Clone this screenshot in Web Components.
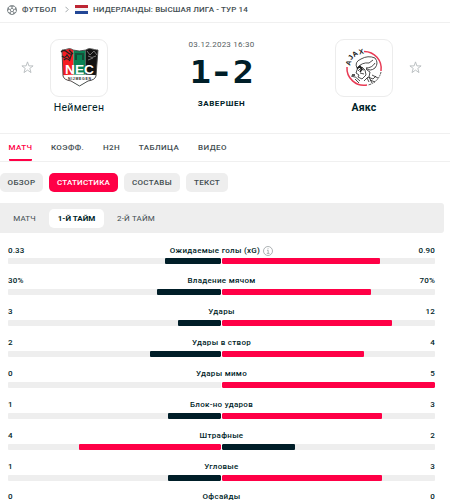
<!DOCTYPE html>
<html lang="ru">
<head>
<meta charset="utf-8">
<title>Неймеген - Аякс</title>
<style>
  :root {
    --navy: #001e28;
    --red: #ff0046;
    --grey: #eee;
    --muted: #555e61;
  }

  body {
    margin: 0;
    height: 500px;
    overflow: hidden;
    background: #fff;
    color: var(--navy);
    font-family: Roboto, "Liberation Sans", sans-serif;
    font-size: 8px;
  }
</style>
</head>
<body>
<match-page></match-page>

<script>
class MatchBreadcrumb extends HTMLElement {
  constructor () {
    super();
    this.attachShadow({ mode: "open" });
  }

  connectedCallback () {
    this.shadowRoot.innerHTML = /* html */`
    <style>
      :host {
        display: flex;
        align-items: center;
        box-sizing: border-box;
        height: 23px;
        padding: 0 0 3px 7px;
        border-bottom: 1px solid #f0f0f0;
        color: #414c50;
        font-size: 8px;
        font-weight: 500;
        white-space: nowrap;
      }
      .sport { width: 43px; margin-left: 5px; letter-spacing: .35px; }
      .flag { margin: 0 5px 0 5px; }
      .league { letter-spacing: .14px; }
    </style>
    <svg width="10" height="10" viewBox="0 0 10 10" fill="none" stroke="#6b7477" stroke-width=".8">
      <circle cx="5" cy="5" r="4.5"/>
      <path d="M5 3.2 6.8 4.5 6.1 6.6H3.9L3.2 4.5ZM5 3.2V1.8M6.8 4.5 8.3 4M6.1 6.6 7 8M3.9 6.6 3 8M3.2 4.5 1.7 4M3.2 1.2 5 1.8 6.8 1.2M8.9 2.7 8.3 4 9.3 5.6M8.6 7.5 7 8 5.7 9.3M4.3 9.3 3 8 1.4 7.5M.7 5.6 1.7 4 1.1 2.7"/>
    </svg>
    <div class="sport">ФУТБОЛ</div>
    <svg width="5" height="7" viewBox="0 0 5 7" fill="none" stroke="#999fa1" stroke-width=".9"><path d="M.5 .8 3.2 3.5 .5 6.2"/></svg>
    <svg class="flag" width="13" height="9" viewBox="0 0 13 9"><path fill="#bd2634" d="M0 0h13v3H0z"/><path fill="#f4f4f4" d="M0 3h13v3H0z"/><path fill="#224796" d="M0 6h13v3H0z"/></svg>
    <div class="league">НИДЕРЛАНДЫ: ВЫСШАЯ ЛИГА - ТУР 14</div>
    `;
  }
}

// team badge with its name below; the crest goes in the slot
class TeamCard extends HTMLElement {
  constructor () {
    super();
    this.attachShadow({ mode: "open" });
  }

  connectedCallback () {
    const star = /* html */`
      <svg class="star" width="13" height="13" viewBox="0 0 13 13" fill="none" stroke="#b5bbbd" stroke-width=".9">
        <path d="M6.5 .9 7.9 4.9H12.1L8.8 7.4 10 11.6 6.5 9.1 3 11.6 4.2 7.4 .9 4.9H5.1Z"/>
      </svg>`;
    const column = /* html */`
      <div class="team">
        <div class="logo"><slot></slot></div>
        <div class="name">${this.getAttribute("name")}</div>
      </div>`;

    this.shadowRoot.innerHTML = /* html */`
    <style>
      :host { display: flex; gap: 16px; }
      .star { margin-top: 22px; }
      .team { display: flex; flex-direction: column; align-items: center; width: 58px; }
      .logo {
        display: flex;
        align-items: center;
        justify-content: center;
        box-sizing: border-box;
        width: 58px;
        height: 58px;
        border: 1px solid #ececec;
        border-radius: 9px;
      }
      .name {
        margin-top: 4px;
        font-size: 10.5px;
        font-weight: ${this.getAttribute("weight") || 400};
        line-height: 13px;
        letter-spacing: ${this.getAttribute("spacing") || "0"};
      }
    </style>
    ${this.hasAttribute("away") ? column + star : star + column}
    `;
  }
}

class MatchHeader extends HTMLElement {
  constructor () {
    super();
    this.attachShadow({ mode: "open" });
  }

  connectedCallback () {
    this.shadowRoot.innerHTML = /* html */`
    <style>
      :host {
        display: flex;
        justify-content: space-between;
        box-sizing: border-box;
        height: 110px;
        padding: 16px 28px 0 21px;
      }
      .info { display: flex; flex-direction: column; align-items: center; white-space: nowrap; }
      .date { margin-top: 1px; font-size: 8px; line-height: 10px; color: #555e61; letter-spacing: .23px; }
      .score {
        display: flex;
        gap: 1px;
        height: 36px;
        margin-top: 3px;
        font-family: "DejaVu Sans Mono", monospace;
        font-size: 32px;
        font-weight: 700;
        line-height: 38px;
      }
      .score span { width: 20.5px; text-align: center; transform: scaleX(1.1); }
      .score .dash { transform: scaleX(1.25); }
      .status { margin-top: 10px; font-size: 8px; font-weight: 700; line-height: 10px; letter-spacing: .6px; }
    </style>
    <team-card name="Неймеген" spacing=".25px">
      <svg width="43" height="42" viewBox="0 0 41 42">
        <defs><clipPath id="crest"><path d="M3 3C8 3 10 0 14 3Q20 5 27 3C31 0 34 3 39 3L37 29Q36 33 29 34L20.500 39 12 34Q5 33 4 29Z"/></clipPath></defs>
        <g clip-path="url(#crest)">
          <path fill="#f51d23" d="M0 0h14.500v42H0z"/>
          <path fill="#078153" d="M14.500 0h12v42h-12z"/>
          <path fill="#121212" d="M26.500 0H41v42H26.500z"/>
          <path fill="#fff" d="M0 28.500Q20.500 26.500 41 28.500V42H0z"/>
        </g>
        <path fill="none" stroke="#444" stroke-width=".9" d="M3 3C8 3 10 0 14 3Q20 5 27 3C31 0 34 3 39 3L37 29Q36 33 29 34L20.500 39 12 34Q5 33 4 29Z"/>
        <path fill="none" stroke="#222" stroke-width="1.200" d="M2 5Q5 2 8 5T13 7M3 9Q6 12 8 8L11 12 13 6M5 13Q8 10 11 14M10 3 14 7M16 7H25M17 8V13M24 8V13"/>
        <path fill="none" stroke="#777" stroke-width="1" d="M28 4 31 8 35 4 38 8M29 9Q33 12 37 9M29 13 34 11"/>
        <text x="20.500" y="26.500" text-anchor="middle" textLength="29" lengthAdjust="spacingAndGlyphs" font-family="Liberation Sans" font-size="13.500" font-weight="700" fill="#fff">NEC</text>
        <text x="20.500" y="33" text-anchor="middle" textLength="23" font-family="Liberation Sans" font-size="3.500" font-weight="700" fill="#222">NIJMEGEN</text>
      </svg>
    </team-card>
    <div class="info">
      <div class="date">03.12.2023 16:30</div>
      <div class="score"><span>1</span><span class="dash">-</span><span>2</span></div>
      <div class="status">ЗАВЕРШЕН</div>
    </div>
    <team-card away name="Аякс" weight="700" spacing=".2px">
      <svg width="40" height="40" viewBox="0 0 40 40" overflow="visible">
        <path fill="none" stroke="#e83b55" stroke-width="1.500" d="M20 3.500A17 17 0 0 1 37 23M3 19A17 17 0 0 0 23 37"/>
        <path fill="none" stroke="#555" stroke-width="1" stroke-dasharray="2 .7" d="M37 24A17 17 0 0 1 24 37"/>
        <g font-family="Liberation Sans" font-size="7" font-weight="700" fill="#151515">
          <text transform="translate(6 18) rotate(-72)">A</text>
          <text transform="translate(7.500 12.300) rotate(-55)">J</text>
          <text transform="translate(10.300 9.300) rotate(-37)">A</text>
          <text transform="translate(15.500 6.500) rotate(-14)">X</text>
        </g>
        <g fill="none" stroke="#222" stroke-width=".8" stroke-linejoin="round">
          <path d="M13 20Q10 14 17 11 24 7 31 10 35 15 31 20 26 24 22 20 28 20 31 15M13 20Q18 14 25 15L29 12M14 19 12 25 15 27 14 29 18 31 22 27 21 22 18 19 14 23M16 21 20 22M16 25 20 26M22 21Q24 23 26 24L25 29M7 28Q12 28 16 33M11 31 15 35M20 33 24 29 29 31 32 28M25 29 28 35M28 27 34 30M26 32 31 34M23 30 25 34"/>
          <path stroke-width="1.400" d="M13 21 16 18 18 21 16 24M8 27 11 27"/>
        </g>
      </svg>
    </team-card>
    `;
  }
}

class NavTab extends HTMLElement {
  constructor () {
    super();
    this.attachShadow({ mode: "open" });
  }

  connectedCallback () {
    this.shadowRoot.innerHTML = /* html */`
    <style>
      :host {
        display: flex;
        align-items: center;
        justify-content: center;
        box-sizing: border-box;
        height: 27px;
        padding-top: 2px;
        border-bottom: 2px solid transparent;
        border-radius: 1px;
        color: #414c50;
        font-weight: 500;
        letter-spacing: .4px;
        white-space: nowrap;
      }
      :host([active]) { color: var(--red); border-color: var(--red); }
    </style>
    <slot></slot>
    `;
  }
}

class FilterPill extends HTMLElement {
  constructor () {
    super();
    this.attachShadow({ mode: "open" });
  }

  connectedCallback () {
    this.shadowRoot.innerHTML = /* html */`
    <style>
      :host {
        display: flex;
        align-items: center;
        justify-content: center;
        box-sizing: border-box;
        height: 19px;
        border-radius: 5px;
        background: var(--grey);
        color: #414c50;
        font-weight: 500;
        letter-spacing: .35px;
        white-space: nowrap;
      }
      :host([active]) { background: var(--red); color: #fff; letter-spacing: .22px; }
      :host([light]) { background: transparent; font-weight: 400; letter-spacing: .15px; }
      :host([light][active]) { background: #fff; color: var(--navy); font-weight: 700; letter-spacing: 0; }
    </style>
    <slot></slot>
    `;
  }
}

class StatRow extends HTMLElement {
  constructor () {
    super();
    this.attachShadow({ mode: "open" });
  }

  connectedCallback () {
    const home = this.getAttribute("home");
    const away = this.getAttribute("away");
    const left = Number(this.getAttribute("left"));
    const right = Number(this.getAttribute("right"));
    const better = "var(--red)";
    const worse = "var(--navy)";

    this.shadowRoot.innerHTML = /* html */`
    <style>
      :host { display: block; height: 30.87px; }
      .values {
        display: grid;
        grid-template-columns: 1fr auto 1fr;
        height: 10px;
        margin-bottom: 2.9px;
        align-items: center;
        font-size: 8px;
        font-weight: 500;
        line-height: 10px;
        letter-spacing: .15px;
        white-space: nowrap;
      }
      .values :last-child { text-align: right; }
      .label { display: flex; align-items: center; letter-spacing: .3px; }
      .bars { display: flex; gap: 1.5px; height: 6px; }
      .bar { display: flex; flex: 1; border-radius: 1px; background: var(--grey); overflow: hidden; }
      .bar:first-child { justify-content: flex-end; }
      .fill { border-radius: 1px; }
    </style>
    <div class="values">
      <span>${home}</span>
      <span class="label">${this.getAttribute("label")}<slot></slot></span>
      <span>${away}</span>
    </div>
    <div class="bars">
      <div class="bar"><div class="fill" style="width:${left}%;background:${left > right ? better : worse}"></div></div>
      <div class="bar"><div class="fill" style="width:${right}%;background:${right > left ? better : worse}"></div></div>
    </div>
    `;
  }
}

class MatchPage extends HTMLElement {
  constructor () {
    super();
    this.attachShadow({ mode: "open" });
  }

  connectedCallback () {
    this.shadowRoot.innerHTML = /* html */`
    <style>
      :host { display: block; }
      nav {
        display: flex;
        gap: 19px;
        height: 27px;
        padding-left: 9px;
        border: solid #f0f0f0;
        border-width: 1px 0;
      }
      .pills { display: flex; gap: 6px; padding: 11px 0; }
      .periods {
        display: flex;
        align-items: center;
        box-sizing: border-box;
        width: 444px;
        height: 30px;
        border-radius: 0 3px 3px 0;
        background: var(--grey);
      }
      .stats { padding: 12.6px 15px 0 8px; }
      .info { margin-left: 3px; }
    </style>
    <match-breadcrumb></match-breadcrumb>
    <match-header></match-header>
    <nav>
      <nav-tab active style="width:23px">МАТЧ</nav-tab>
      <nav-tab style="width:33px">КОЭФФ.</nav-tab>
      <nav-tab style="width:17px">H2H</nav-tab>
      <nav-tab style="width:40px">ТАБЛИЦА</nav-tab>
      <nav-tab style="width:29px">ВИДЕО</nav-tab>
    </nav>
    <div class="pills">
      <filter-pill style="width:43px">ОБЗОР</filter-pill>
      <filter-pill active style="width:69px">СТАТИСТИКА</filter-pill>
      <filter-pill style="width:56px">СОСТАВЫ</filter-pill>
      <filter-pill style="width:42px">ТЕКСТ</filter-pill>
    </div>
    <div class="periods">
      <filter-pill light style="width:49px">МАТЧ</filter-pill>
      <filter-pill light active style="width:55px">1-Й ТАЙМ</filter-pill>
      <filter-pill light style="width:64px">2-Й ТАЙМ</filter-pill>
    </div>
    <div class="stats">
      <stat-row label="Ожидаемые голы (xG)" home="0.33" away="0.90" left="26" right="74">
        <svg class="info" width="10" height="10" viewBox="0 0 10 10" fill="none" stroke="#999fa1" stroke-width=".8"><circle cx="5" cy="5" r="4.500"/><path d="M4 4.300H5.200V7.300M3.800 7.400H6.500M4.600 2.700H5.500"/></svg>
      </stat-row>
      <stat-row label="Владение мячом" home="30%" away="70%" left="30" right="70"></stat-row>
      <stat-row label="Удары" home="3" away="12" left="20" right="80"></stat-row>
      <stat-row label="Удары в створ" home="2" away="4" left="33.3" right="66.7"></stat-row>
      <stat-row label="Удары мимо" home="0" away="5" left="0" right="100"></stat-row>
      <stat-row label="Блок-но ударов" home="1" away="3" left="25" right="75"></stat-row>
      <stat-row label="Штрафные" home="4" away="2" left="66.5" right="34"></stat-row>
      <stat-row label="Угловые" home="1" away="3" left="25" right="75"></stat-row>
      <stat-row label="Офсайды" home="0" away="0" left="0" right="0"></stat-row>
    </div>
    `;
  }
}

customElements.define("match-breadcrumb", MatchBreadcrumb);
customElements.define("team-card", TeamCard);
customElements.define("match-header", MatchHeader);
customElements.define("nav-tab", NavTab);
customElements.define("filter-pill", FilterPill);
customElements.define("stat-row", StatRow);
customElements.define("match-page", MatchPage);
</script>
</body>
</html>
